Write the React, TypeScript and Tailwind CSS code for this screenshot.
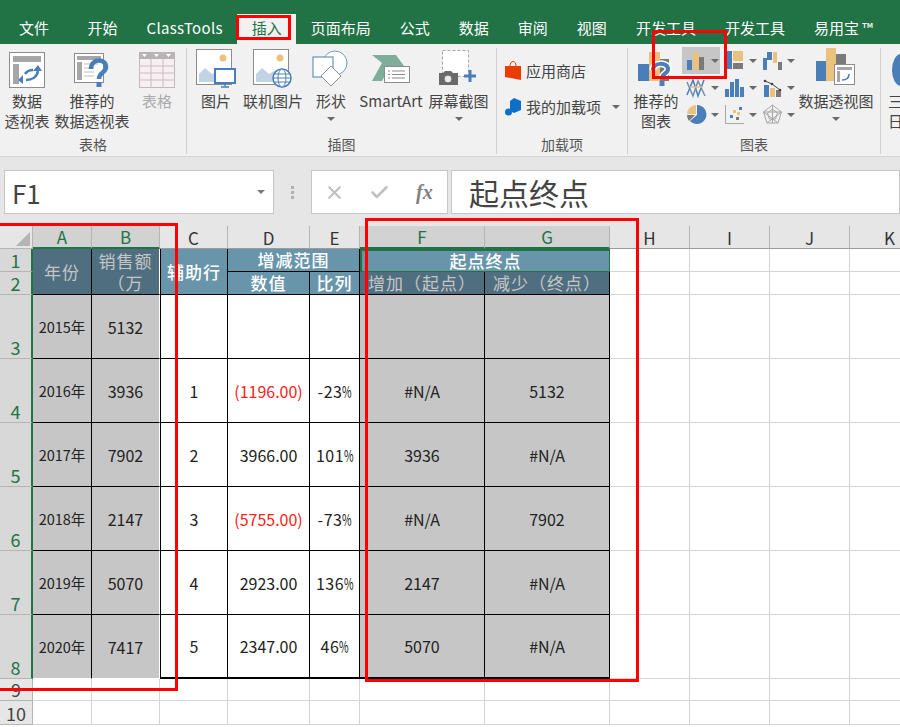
import type { ReactNode } from "react";
import { X, Check } from "lucide-react";

const BLUE = "#4a7eb8";
const TAN = "#eac27e";
const GRAY = "#7a7a7a";

const tabs = ["开始", "ClassTools", "插入", "页面布局", "公式", "数据", "审阅", "视图", "开发工具", "开发工具", "易用宝 ™"];

const Caret = ({ className = "" }: { className?: string }) => (
	<span className={`inline-block w-0 h-0 border-x-[4px] border-x-transparent border-t-[4px] border-t-[#6a6a6a] ${className}`} />
);

const PivotIcon = () => (
	<svg width="36" height="36" viewBox="0 0 36 36">
		<rect x="0.5" y="0.5" width="35" height="35" fill="#fff" stroke="#8c8c8c" />
		<rect x="4" y="4" width="28" height="6" fill="#a6a6a6" />
		<rect x="4" y="12" width="6" height="20" fill="#a6a6a6" />
		<path d="M17 28c6 0 11-3 12-9" fill="none" stroke={BLUE} strokeWidth="2.500" />
		<path d="M29 13l-5 6h9zM14 23l-5 5 5 4z" fill={BLUE} />
		<path d="M16 22c2-3 4-4 8-4" fill="none" stroke={BLUE} strokeWidth="2.500" />
	</svg>
);

const RecPivotIcon = () => (
	<svg width="36" height="36" viewBox="0 0 36 36">
		<rect x="0.5" y="1.500" width="29" height="29" fill="#fff" stroke="#8c8c8c" />
		<rect x="3" y="4" width="24" height="4" fill="#a6a6a6" />
		<rect x="3" y="10" width="5" height="18" fill="#a6a6a6" />
		<path d="M10 12h14M10 16h10M10 20h10M10 24h10" stroke="#bdbdbd" />
		<path d="M17 17c0-11 15-11 15-2 0 6-7 5-7 12" fill="none" stroke={BLUE} strokeWidth="4.500" />
		<rect x="22.500" y="30" width="5" height="5" fill={BLUE} />
	</svg>
);

const TableIcon = () => (
	<svg width="36" height="36" viewBox="0 0 36 36">
		<rect x="0.5" y="0.5" width="35" height="35" fill="#f7eff2" stroke="#c2b8bb" />
		<rect x="0" y="0" width="36" height="7" fill="#b8b3b5" />
		<path d="M0 14h36M0 21h36M0 28h36M12 7v29M24 7v29" stroke="#c9bcc1" />
		<path d="M3 2h5l-2.500 3zM15 2h5l-2.500 3zM27 2h5l-2.500 3z" fill="#fff" />
	</svg>
);

const Picture = ({ badge }: { badge: ReactNode }) => (
	<svg width="40" height="40" viewBox="0 0 40 40">
		<rect x="0.5" y="1.500" width="35" height="35" fill="#fff" stroke="#8c8c8c" />
		<circle cx="27" cy="10" r="3.500" fill={TAN} />
		<path d="M3 34V26l6-6 7 6 5-3 8 7v4z" fill="#c3d3e6" />
		{badge}
	</svg>
);

const ShapesIcon = () => (
	<svg width="38" height="38" viewBox="0 0 38 38">
		<circle cx="23" cy="13" r="12" fill="#fff" stroke="#6f9ccb" />
		<rect x="1" y="7" width="20" height="20" fill="#fff" stroke="#4a7eb8" />
		<path d="M19 16l10 10-10 10-10-10z" fill="#fff" stroke="#8c8c8c" />
	</svg>
);

const SmartArtIcon = () => (
	<svg width="38" height="34" viewBox="0 0 38 34">
		<path d="M0 1h24l8 11v4H6l4-7z" fill="#7fad9c" />
		<path d="M0 27h10l6-11H6z" fill="#7fad9c" />
		<rect x="12.500" y="12.500" width="25" height="16" fill="#fff" stroke="#8c8c8c" />
		<path d="M20 17h13M20 20.500h13M20 24h13M16 17h2M16 20.500h2M16 24h2" stroke="#8c8c8c" />
	</svg>
);

const ScreenshotIcon = () => (
	<svg width="40" height="40" viewBox="0 0 40 40">
		<rect x="3.500" y="2.500" width="26" height="26" fill="#fff" stroke="#a6a6a6" strokeDasharray="3 2" />
		<path d="M0 25h4l2-2h6l2 2h5v12H0z" fill="#6a6a6a" />
		<circle cx="9" cy="31" r="4" fill="#e8e8e8" stroke="#6a6a6a" />
		<path d="M31 22v12M25 28h12" stroke={BLUE} strokeWidth="3" />
	</svg>
);

const RecChartIcon = () => (
	<svg width="40" height="38" viewBox="0 0 40 38">
		<rect x="2" y="14" width="11" height="17" fill={BLUE} />
		<rect x="13" y="2" width="11" height="29" fill={TAN} />
		<rect x="24" y="9" width="9" height="22" fill={GRAY} />
		<path d="M17 20c0-8 15-8 15-1 0 5-6 4-6 10" fill="none" stroke="#fff" strokeWidth="7" />
		<path d="M17 20c0-8 15-8 15-1 0 5-6 4-6 10" fill="none" stroke={BLUE} strokeWidth="4" />
		<rect x="23.500" y="31" width="5" height="5" fill={BLUE} />
	</svg>
);

const PivotChartIcon = () => (
	<svg width="40" height="40" viewBox="0 0 40 40">
		<rect x="0" y="13" width="10" height="20" fill={BLUE} />
		<rect x="10" y="0" width="10" height="33" fill={TAN} />
		<rect x="20" y="6" width="10" height="27" fill={GRAY} />
		<rect x="18.500" y="16.500" width="20" height="20" fill="#fff" stroke="#8c8c8c" />
		<rect x="21" y="19" width="15" height="3" fill="#a6a6a6" />
		<rect x="21" y="23" width="3" height="11" fill="#a6a6a6" />
		<path d="M26 32c4 0 7-2 7-6" fill="none" stroke={BLUE} strokeWidth="1.500" />
	</svg>
);

const chartIcons: ReactNode[] = [
	<g key="col"><rect x="1" y="10" width="5" height="10" fill={BLUE} /><rect x="7" y="3" width="6" height="17" fill={TAN} /><rect x="13" y="7" width="5" height="13" fill={GRAY} /></g>,
	<g key="tree"><rect x="2" y="1" width="6" height="18" fill={BLUE} /><rect x="9" y="1" width="10" height="10" fill={TAN} /><rect x="9" y="13" width="10" height="6" fill={GRAY} /></g>,
	<g key="fall"><rect x="1" y="8" width="4" height="12" fill={BLUE} /><rect x="5" y="2" width="5" height="8" fill={BLUE} /><rect x="11" y="2" width="4" height="11" fill={TAN} /><rect x="16" y="12" width="4" height="8" fill={GRAY} /></g>,
	<g key="line" fill="none" strokeWidth="1.500"><path d="M1 18L7 3l5 16 6-16" stroke={BLUE} /><path d="M1 5l6 14 5-15 7 15" stroke="#6d8fb5" /><path d="M4 10h13" stroke={TAN} /></g>,
	<g key="hist" fill={BLUE}><rect x="1" y="12" width="4" height="8" /><rect x="6" y="5" width="4" height="15" /><rect x="11" y="2" width="4" height="18" /><rect x="16" y="10" width="4" height="10" /></g>,
	<g key="combo"><rect x="2" y="8" width="5" height="12" fill={BLUE} /><rect x="8" y="11" width="5" height="9" fill={TAN} /><rect x="14" y="13" width="5" height="7" fill={GRAY} /><path d="M3 4l7 3 8 6" fill="none" stroke="#444" /><circle cx="3" cy="4" r="1.300" fill="#444" /><circle cx="10" cy="7" r="1.300" fill="#444" /><circle cx="18" cy="13" r="1.300" fill="#444" /></g>,
	<g key="pie"><path d="M11 1a9.500 9.500 0 1 1-7 16l7-6z" fill={BLUE} /><path d="M10 1v9H1a9 9 0 0 1 9-9z" fill={TAN} /><path d="M1 11h8l-6 6a9 9 0 0 1-2-6z" fill={GRAY} /></g>,
	<g key="scatter"><path d="M1.500 1v18.500H20" fill="none" stroke="#a6a6a6" /><rect x="6" y="11" width="3" height="3" fill={BLUE} /><rect x="9" y="6" width="3" height="3" fill={TAN} /><rect x="13" y="8" width="3" height="3" fill={TAN} /><rect x="15" y="3" width="3" height="3" fill={BLUE} /><rect x="12" y="13" width="3" height="3" fill={GRAY} /></g>,
	<g key="radar" fill="none" stroke="#a6a6a6"><path d="M10.500 1l9 7-3.500 11H5L1.500 8z" /><path d="M10.500 5l5 4-2 6h-6l-2-6z" /><path d="M10.500 1v18M1.500 8l18 0M5 19L19.500 8M16 19L1.500 8" /></g>,
];

const BigButton = ({ icon, lines, caret, muted, className = "" }: { icon: ReactNode; lines: string[]; caret?: boolean; muted?: boolean; className?: string }) => (
	<div className={`flex flex-col items-center ${className}`}>
		<div className="h-[40px] flex items-end justify-center">{icon}</div>
		<div className={`text-[15px] leading-[20px] mt-[3px] whitespace-nowrap ${muted ? "text-[#aaa]" : "text-[#444]"}`}>
			{lines.map((l) => (
				<div key={l} className="text-center">{l}</div>
			))}
		</div>
		{caret && <Caret className="mt-[6px]" />}
	</div>
);

const Group = ({ label, className, children }: { label: string; className: string; children: ReactNode }) => (
	<div className={`flex flex-col shrink-0 h-[106px] border-r border-[#d0d0d0] ${className}`}>
		<div className="flex-1 flex">{children}</div>
		<div className="text-center text-[14px] leading-[20px] text-[#555]">{label}</div>
	</div>
);

const Ribbon = () => (
	<div className="h-[113px] bg-[#f1f1f1] pt-[4px] flex border-b border-[#d4d4d4] overflow-hidden">
		<Group label="表格" className="w-[187px]">
			<BigButton icon={<PivotIcon />} lines={["数据", "透视表"]} className="w-[46px] ml-[4px]" />
			<BigButton icon={<RecPivotIcon />} lines={["推荐的", "数据透视表"]} className="w-[76px] ml-[4px]" />
			<BigButton icon={<TableIcon />} lines={["表格"]} muted className="w-[36px] ml-[9px]" />
		</Group>
		<Group label="插图" className="w-[310px]">
			<BigButton
				className="w-[40px] ml-[9px]"
				lines={["图片"]}
				icon={<Picture badge={<g><rect x="19" y="21" width="20" height="14" fill="#fff" stroke={BLUE} strokeWidth="2" /><path d="M29 35v3M25 39h8" stroke={BLUE} strokeWidth="1.500" /></g>} />}
			/>
			<BigButton
				className="w-[60px] ml-[7px]"
				lines={["联机图片"]}
				icon={<Picture badge={<g fill="#fff" stroke={BLUE}><circle cx="29" cy="30" r="9" strokeWidth="1.500" /><ellipse cx="29" cy="30" rx="4" ry="9" /><path d="M20 30h18M21 26h16M21 34h16" /></g>} />}
			/>
			<BigButton className="w-[38px] ml-[9px]" lines={["形状"]} caret icon={<ShapesIcon />} />
			<BigButton className="w-[66px] ml-[8px]" lines={["SmartArt"]} icon={<SmartArtIcon />} />
			<BigButton className="w-[61px] ml-[4px]" lines={["屏幕截图"]} caret icon={<ScreenshotIcon />} />
		</Group>
		<Group label="加载项" className="w-[131px]">
			<div className="flex flex-col pl-[8px] pt-[5px] text-[15px] text-[#444]">
				<div className="flex items-center h-[36px] gap-[5px]">
					<svg width="16" height="20" viewBox="0 0 16 20">
						<path d="M0 5h16v14L0 16z" fill="#eb3c00" />
						<path d="M5 5c0-6 6-6 6 0" fill="none" stroke="#eb3c00" />
					</svg>
					<span>应用商店</span>
				</div>
				<div className="flex items-center h-[36px] gap-[5px] whitespace-nowrap">
					<svg width="16" height="18" viewBox="0 0 16 18">
						<path d="M9 0l7 3v9l-7 3-4-2V3z" fill="#0f6fc6" />
						<circle cx="3.500" cy="14" r="3.500" fill="#0f6fc6" />
					</svg>
					<span>我的加载项</span>
					<Caret className="ml-[6px]" />
				</div>
			</div>
		</Group>
		<Group label="图表" className="w-[253px]">
			<BigButton icon={<RecChartIcon />} lines={["推荐的", "图表"]} className="w-[46px] ml-[5px]" />
			<div className="grid grid-cols-[38px_38px_38px] grid-rows-[27px_27px_27px] ml-[3px] -mt-[1px] h-[81px]">
				{chartIcons.map((icon, i) => (
					<div key={i} className={`flex items-center gap-[4px] pl-[4px] ${i === 0 ? "bg-[#c6c6c6]" : ""}`}>
						<svg width="21" height="21" viewBox="0 0 21 21" className="shrink-0">{icon}</svg>
						<Caret />
					</div>
				))}
			</div>
			<BigButton icon={<PivotChartIcon />} lines={["数据透视图"]} caret className="w-[76px] ml-[2px]" />
		</Group>
		<div className="flex flex-col items-start pl-[7px] shrink-0 text-[15px] leading-[20px] text-[#444]">
			<svg width="20" height="36" viewBox="0 0 20 36" className="mt-[4px]">
				<ellipse cx="13" cy="18" rx="9" ry="16" fill={BLUE} />
			</svg>
			<div className="mt-[3px]">三</div>
			<div>日</div>
		</div>
	</div>
);

const FormulaBar = () => (
	<div className="h-[69px] bg-[#e6e6e6] pt-[13px] pl-[4px] flex items-start">
		<div className="w-[270px] h-[44px] shrink-0 bg-white border border-[#c6c6c6] flex items-center justify-between pl-[7px] pr-[8px]">
			<span className="text-[26px] text-[#444]">F1</span>
			<Caret className="border-t-[#777]" />
		</div>
		<div className="w-[37px] h-[44px] shrink-0 flex flex-col items-center justify-center gap-[2px]">
			<span className="w-[3px] h-[3px] bg-[#b0b0b0]" />
			<span className="w-[3px] h-[3px] bg-[#b0b0b0]" />
			<span className="w-[3px] h-[3px] bg-[#b0b0b0]" />
		</div>
		<div className="w-[137px] h-[44px] shrink-0 bg-white border border-[#c6c6c6] flex items-center">
			<X size={21} className="text-[#c0c0c0] ml-[12px]" strokeWidth={2.5} />
			<Check size={21} className="text-[#c0c0c0] ml-[24px]" strokeWidth={3} />
			<span className="ml-[26px] text-[20px] italic font-bold text-[#808080] [font-family:'Liberation_Serif',serif]">fx</span>
		</div>
		<div className="ml-[3px] flex-1 h-[44px] bg-white border border-[#c6c6c6] text-[30px] leading-[42px] pl-[17px] text-[#444]">起点终点</div>
	</div>
);

const colHeads = ["A", "B", "C", "D", "E", "F", "G", "H", "I", "J", "K"];
const selectedCols = ["A", "B", "F", "G"];
const rowHeads = ["1", "2", "3", "4", "5", "6", "7", "8", "9", "10"];

const dataRows = [
	["2015年", "5132", "", "", "", "", ""],
	["2016年", "3936", "1", "(1196.00)", "-23%", "#N/A", "5132"],
	["2017年", "7902", "2", "3966.00", "101%", "3936", "#N/A"],
	["2018年", "2147", "3", "(5755.00)", "-73%", "#N/A", "7902"],
	["2019年", "5070", "4", "2923.00", "136%", "2147", "#N/A"],
	["2020年", "7417", "5", "2347.00", "46%", "5070", "#N/A"],
];

const RowHead = ({ n, green }: { n: string; green: boolean }) => (
	<div className={`flex items-end justify-center text-[18px] leading-[22px] border-b border-r border-[#b5b5b5] ${green ? "bg-[#d8d8d8] text-[#217346] border-r-[#217346] border-r-2" : "bg-[#e6e6e6] text-[#444]"}`}>
		{n}
	</div>
);

const Blank = () => <div className="border-r border-b border-[#d4d4d4] bg-white" />;

const HeadCell = ({ text, dark, className = "" }: { text: ReactNode; dark?: boolean; className?: string }) => (
	<div className={`flex items-center justify-center text-center text-[17px] leading-[22px] border-r border-b border-black whitespace-nowrap overflow-hidden ${dark ? "bg-[#4f6f80] text-[#c6c6c6]" : "bg-[#6895aa] text-white font-medium"} ${className}`}>
		{text}
	</div>
);

const cellClass = (c: number, last: boolean) => {
	const inAB = c < 2;
	const shaded = inAB || c > 4;
	const right = c === 1 ? "border-r-white" : "border-r-black";
	const bottom = last ? (inAB ? "border-b border-b-white" : "border-b-2 border-b-black") : "border-b border-b-black";
	const left = c === 2 ? "border-l border-l-black" : "";
	const size = c === 0 ? "text-[14.5px]" : "";
	return `flex items-center justify-center border-r ${right} ${bottom} ${left} ${shaded ? "bg-[#c6c6c6]" : "bg-white"} ${size}`;
};

const CellValue = ({ v }: { v: string }) => {
	if (v.endsWith("%")) {
		return (
			<span className="tracking-[0.5px] whitespace-nowrap">
				{v.slice(0, -1)}
				<span className="inline-block w-[9px] scale-x-[0.65] origin-left tracking-normal">%</span>
			</span>
		);
	}
	if (v.startsWith("(")) return <span className="text-[#ff2020]">{v}</span>;
	return <>{v}</>;
};

const Sheet = () => (
	<div className="grid grid-cols-[33px_59px_68px_68px_82px_50px_125px_125px_80px_80px_80px_80px] grid-rows-[23px_23px_23px_64px_64px_64px_64px_64px_64px_22px_24px] text-[16px] leading-[20px] text-[#222] bg-white">
		<div className="bg-[#e6e6e6] border-r border-b border-[#b5b5b5] flex items-end justify-end p-[2px]">
			<span className="w-0 h-0 border-l-[14px] border-l-transparent border-b-[14px] border-b-[#b5b5b5]" />
		</div>
		{colHeads.map((c) => (
			<div
				key={c}
				className={`flex items-end justify-center text-[17px] leading-[21px] border-r border-[#b5b5b5] ${selectedCols.includes(c) ? "bg-[#d2d2d2] text-[#217346] border-b-2 border-b-[#217346]" : "bg-[#e6e6e6] text-[#333] border-b border-b-[#9a9a9a]"}`}
			>
				{c}
			</div>
		))}

		<RowHead n="1" green />
		<HeadCell dark className="row-span-2 tracking-[1px]" text="年份" />
		<HeadCell dark className="row-span-2 tracking-[1px] whitespace-normal border-r-white" text={<>销售额<br />（万</>} />
		<HeadCell className="row-span-2 tracking-[1px] border-l" text="辅助行" />
		<HeadCell className="col-span-2 tracking-[1px]" text="增减范围" />
		<HeadCell className="col-span-2 tracking-[1px] border-2 border-[#217346]!" text="起点终点" />
		<Blank /><Blank /><Blank /><Blank />

		<RowHead n="2" green />
		<HeadCell className="tracking-[1px]" text="数值" />
		<HeadCell className="tracking-[1px]" text="比列" />
		<HeadCell dark className="tracking-[1px]" text="增加（起点）" />
		<HeadCell dark className="tracking-[1px]" text="减少（终点）" />
		<Blank /><Blank /><Blank /><Blank />

		{dataRows.map((row, r) => (
			<div key={row[0]} className="contents">
				<RowHead n={rowHeads[r + 2]} green />
				{row.map((v, c) => (
					<div key={c} className={cellClass(c, r === dataRows.length - 1)}>
						<CellValue v={v} />
					</div>
				))}
				<Blank /><Blank /><Blank /><Blank />
			</div>
		))}

		{["9", "10"].map((n) => (
			<div key={n} className="contents">
				<RowHead n={n} green={false} />
				{colHeads.map((c) => (
					<Blank key={c} />
				))}
			</div>
		))}
	</div>
);

export default function App() {
	return (
		<div className="relative w-[900px] h-[727px] overflow-hidden bg-white [font-family:'Noto_Sans_CJK_SC','Liberation_Sans',sans-serif]">
			<div className="h-[44px] bg-[#217346] flex items-end pl-[4px] text-[15px] text-white">
				<div className="h-[30px] pl-[15px] pr-[15px] pb-[2px] mr-[9px] flex items-center">文件</div>
				{tabs.map((t, i) => (
					<div key={i} className={`h-[30px] px-[14.5px] pb-[2px] flex items-center whitespace-nowrap ${t === "插入" ? "bg-[#f1f1f1] text-[#217346]" : ""} ${t === "ClassTools" ? "tracking-[0.3px]" : ""}`}>
						{t}
					</div>
				))}
			</div>
			<Ribbon />
			<FormulaBar />
			<Sheet />

			{/* red annotation boxes drawn over the screenshot */}
			<div className="absolute left-[236px] top-[15px] w-[55px] h-[25px] border-[3px] border-[#ff0000]" />
			<div className="absolute left-[652px] top-[30px] w-[75px] h-[49px] border-[3px] border-[#ff0000]" />
			<div className="absolute left-[-3px] top-[223px] w-[181px] h-[468px] border-[3px] border-[#ff0000]" />
			<div className="absolute left-[365px] top-[218px] w-[274px] h-[464px] border-[3px] border-[#ff0000]" />
		</div>
	);
}
